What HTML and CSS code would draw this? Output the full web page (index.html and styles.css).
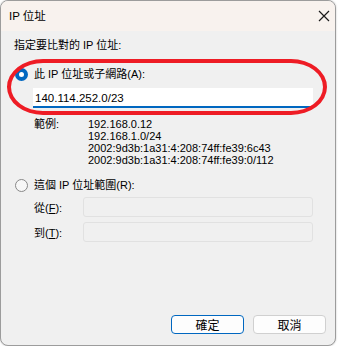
FILE: index.html
```html
<!DOCTYPE html>
<html>
<head>
  <meta charset="utf-8">
  <title>IP 位址</title>
  <link rel="stylesheet" href="styles.css">
</head>
<body>

  <div class="window">

    <div class="titlebar">
      <span class="title">IP 位址</span>
      <svg class="close" width="12" height="12" viewBox="0 0 12 12">
        <path d="M1 1 L11 11 M11 1 L1 11" stroke="#1a1a1a" stroke-width="1.2" fill="none"/>
      </svg>
    </div>

    <div class="content">
      <p class="prompt">指定要比對的 IP 位址:</p>

      <!-- single address / subnet -->
      <div class="group">
        <div class="highlight"></div>
        <div class="option">
          <span class="radio checked"></span>
          <span>此 IP 位址或子網路(A):</span>
        </div>
        <div class="field active">140.114.252.0/23</div>
      </div>

      <div class="examples">
        <span class="ex-label">範例:</span>
        <div class="ex-list">
          <div>192.168.0.12</div>
          <div>192.168.1.0/24</div>
          <div>2002:9d3b:1a31:4:208:74ff:fe39:6c43</div>
          <div>2002:9d3b:1a31:4:208:74ff:fe39:0/112</div>
        </div>
      </div>

      <!-- range -->
      <div class="option option-range">
        <span class="radio"></span>
        <span>這個 IP 位址範圍(R):</span>
      </div>
      <div class="range-row">
        <span class="range-label">從(<u>F</u>):</span>
        <div class="field disabled"></div>
      </div>
      <div class="range-row">
        <span class="range-label">到(<u>T</u>):</span>
        <div class="field disabled"></div>
      </div>
    </div>

    <div class="footer">
      <button class="btn primary">確定</button>
      <button class="btn">取消</button>
    </div>

  </div>

</body>
</html>
```

FILE: styles.css
```css
body     { margin: 0; background: #fff; color: #000;
           font-family: "Liberation Sans", "Noto Sans CJK TC", sans-serif; font-size: 11px; }

.window  { width: 334px; height: 344px; border: 1px solid #9c9c9c; border-radius: 8px; background: #f0f0f0;
           overflow: hidden; display: flex; flex-direction: column; box-shadow: 0 0 2px rgba(0,0,0,.25); }

.titlebar { height: 30px; flex: none; background: #f8f2ee; display: flex; align-items: center;
            justify-content: space-between; padding: 0 5px 0 8px; }
.title    { line-height: 14px; font-size: 11.5px; }

.content  { padding: 7px 0 0 13px; flex: 1; }
.prompt   { margin: 0; line-height: 14px; }

.group    { position: relative; margin-top: 15px; }
.highlight { position: absolute; left: -7px; top: -8px; width: 312px; height: 48px;
             border: 4px solid #ee1c25; border-radius: 36px / 28px; pointer-events: none; }

.option   { display: flex; align-items: center; gap: 6px; line-height: 14px; padding-left: 1px; }
.radio    { width: 11px; height: 11px; border-radius: 50%; border: 1px solid #888; background: #f7f7f7; flex: none; }
.radio.checked { width: 5px; height: 5px; border: 4px solid #0067c0; background: #fff; }

.field    { height: 20px; box-sizing: border-box; margin-left: 19px; width: 280px; }
.field.active   { margin-top: 7px; background: #fff; border-bottom: 2px solid #0067c0; padding: 3px 0 0 2px;
                  font-size: 11.5px; line-height: 14px; }
.field.disabled { width: 230px; margin-left: 0; border: 1px solid #e1e1e1; border-radius: 3px; }

.examples { display: flex; margin-top: 10px; padding-left: 20px; line-height: 12px; }
.ex-label { width: 54px; }

.option-range { margin-top: 12px; }

.range-row   { display: flex; align-items: center; margin-top: 5px; padding-left: 20px; }
.range-row:first-of-type { margin-top: 8px; }
.range-label { width: 49px; }

.footer   { display: flex; justify-content: flex-end; gap: 9px; padding: 0 9px 11px 0; }
.btn      { width: 73px; height: 19px; background: #fdfdfd; border: 1px solid #d0d0d0; border-radius: 4px;
            font: inherit; font-size: 12px; padding: 0; color: #000; }
.btn.primary { border-color: #0067c0; }
```
